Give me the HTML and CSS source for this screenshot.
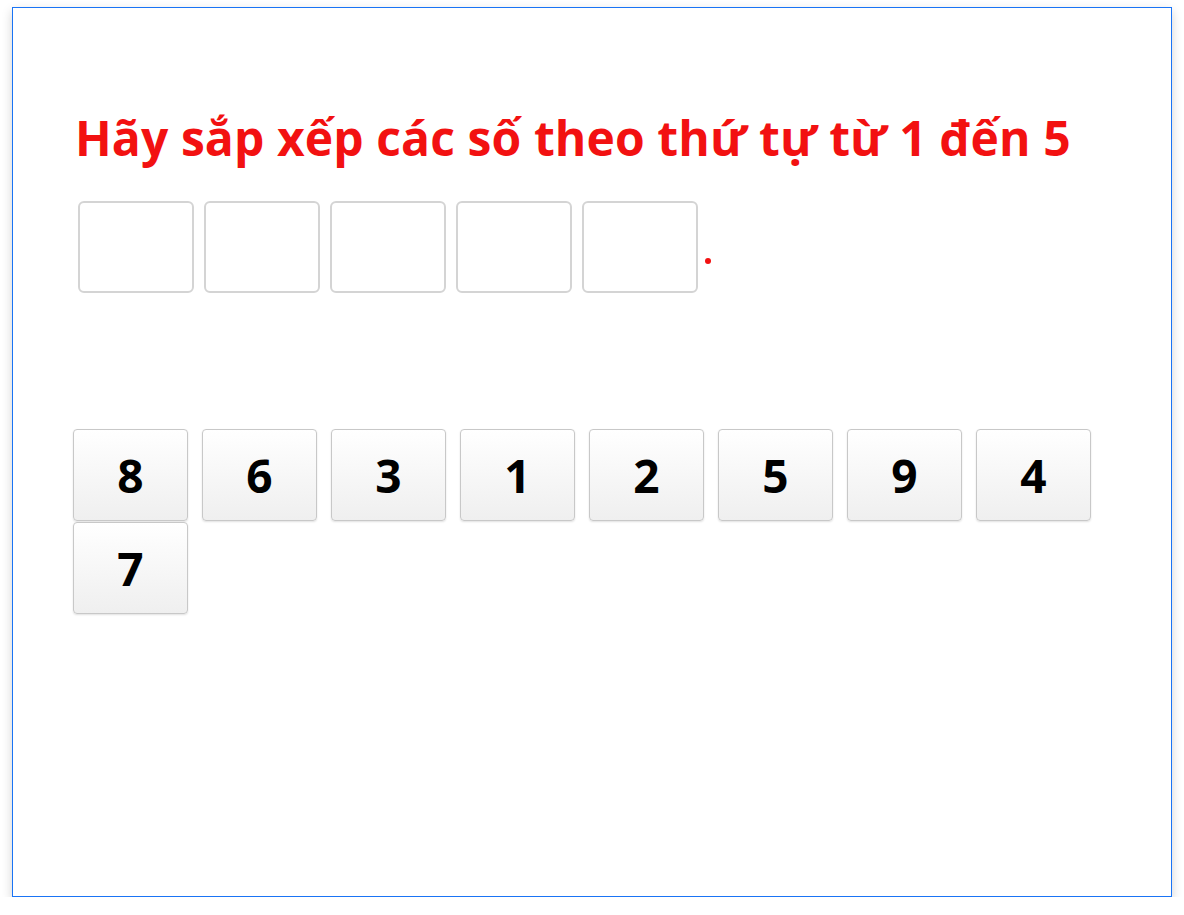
FILE: index.html
```html
<!DOCTYPE html>
<html lang="vi">
<head>
<meta charset="utf-8">
<title>Sắp xếp</title>
<link rel="stylesheet" href="styles.css">
</head>
<body>
<div class="frame">
  <h1 class="title">Hãy sắp xếp các số theo thứ tự từ 1 đến 5</h1>
  <div class="slots">
    <div class="slot"></div>
    <div class="slot"></div>
    <div class="slot"></div>
    <div class="slot"></div>
    <div class="slot"></div>
    <span class="dot"></span>
  </div>
  <div class="tiles">
    <div class="tile">8</div>
    <div class="tile">6</div>
    <div class="tile">3</div>
    <div class="tile">1</div>
    <div class="tile">2</div>
    <div class="tile">5</div>
    <div class="tile">9</div>
    <div class="tile">4</div>
    <div class="tile">7</div>
  </div>
</div>
</body>
</html>
```
FILE: styles.css
```css
html, body {
  margin: 0;
  padding: 0;
  background: #ffffff;
}
body {
  font-family: "Open Sans", "Noto Sans", sans-serif;
}
.frame {
  box-sizing: border-box;
  width: 1160px;
  height: 890px;
  margin: 7px 0 0 12px;
  border: 1px solid #1a74f5;
  background: #fff;
  box-shadow: 0 4px 10px rgba(0, 0, 0, 0.18);
  padding: 0 62px 0 62px;
}
.title {
  margin: 102px 0 0 0;
  font-size: 48px;
  line-height: 56px;
  font-weight: 700;
  letter-spacing: 0.1px;
  color: #f21111;
  white-space: nowrap;
}
.slots {
  display: flex;
  align-items: flex-end;
  gap: 10px;
  margin: 35px 0 0 3px;
}
.slot {
  box-sizing: border-box;
  width: 116px;
  height: 92px;
  border: 2px solid #d4d4d4;
  border-radius: 6px;
  background: #fff;
}
.dot {
  width: 6px;
  height: 6px;
  border-radius: 50%;
  background: #f21111;
  margin: 0 0 29px -3px;
}
.tiles {
  display: flex;
  flex-wrap: wrap;
  column-gap: 14px;
  row-gap: 1px;
  width: 1040px;
  margin: 136px 0 0 -2px;
}
.tile {
  box-sizing: border-box;
  width: 115px;
  height: 92px;
  border: 1px solid #c8c8c8;
  border-radius: 4px;
  background: linear-gradient(#ffffff, #efefef);
  box-shadow: 0 1px 2px rgba(0, 0, 0, 0.12);
  display: flex;
  align-items: center;
  justify-content: center;
  font-size: 46px;
  font-weight: 700;
  color: #000;
}
```
